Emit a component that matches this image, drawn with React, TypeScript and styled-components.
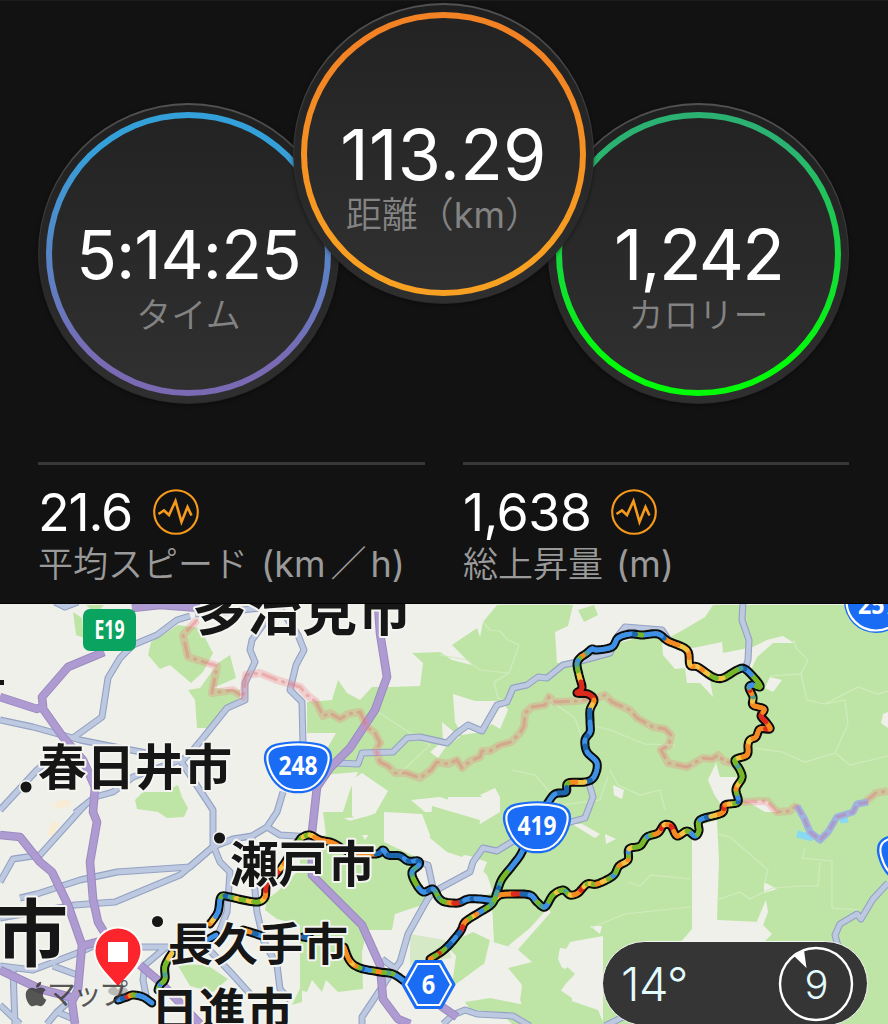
import React from 'react';
import styled, { createGlobalStyle } from 'styled-components'
import { FaApple } from 'react-icons/fa'

const GlobalStyle = createGlobalStyle`
  body {
    margin: 0;
    background: #121212;
    font-family: Inter, "Noto Sans CJK JP", sans-serif;
  }
`

const Page = styled.main`
  width: 888px;
  height: 1024px;
  display: flex;
  flex-direction: column;
  overflow: hidden;
`

const Summary = styled.section`
  height: 604px;
  box-sizing: border-box;
  border-top: 1px solid #1b1b1b;
  border-bottom: 1px solid #050505;
  background: #121212;
`

const DialRow = styled.div`
  display: flex;
  align-items: flex-start;
  padding: 2px 38px 0;
  height: 400px;
`

interface DialProps {
  lowered?: boolean
}

const DialRim = styled.div<DialProps>`
  flex: none;
  box-sizing: border-box;
  width: 301px;
  height: 301px;
  padding: 2px 1px 1px;
  border-radius: 50%;
  background: linear-gradient(#525252, #3e3e3e 30%, #2c2c2c 60%, #292929);
  box-shadow: 0 1px 4px rgba(0, 0, 0, 0.45);
  margin-top: ${(p) => p.lowered ? '100px' : '0'};
  position: relative;
  z-index: ${(p) => p.lowered ? 0 : 1};

  & + & {
    margin-left: -46px;
  }
`

const DialPlate = styled.div`
  height: 100%;
  box-sizing: border-box;
  padding: 7px;
  border-radius: 50%;
  background: linear-gradient(#202020, #2f2f2f);
`

const DialRing = styled.div<{ from: string, to: string }>`
  height: 100%;
  box-sizing: border-box;
  padding: 6px;
  border-radius: 50%;
  background: linear-gradient(${(p) => p.from} 12%, ${(p) => p.to} 88%);
`

const DialFace = styled.div`
  height: 100%;
  box-sizing: border-box;
  padding-top: 97px;
  border-radius: 50%;
  background: linear-gradient(#232323, #303030);
  display: flex;
  flex-direction: column;
  align-items: center;
`

const DialValue = styled.div<{ size: number, spacing: number }>`
  height: 74px;
  line-height: 80px;
  font-size: ${(p) => p.size}px;
  letter-spacing: ${(p) => p.spacing}px;
  color: #fff;
  white-space: nowrap;
`

const DialLabel = styled.div<{ size: number }>`
  font-size: ${(p) => p.size}px;
  font-weight: 350;
  line-height: 52px;
  color: #838383;
  white-space: nowrap;
`

const Unit = styled.span`
  font-size: 36px;
  font-weight: 400;
`

const Slash = styled.span`
  margin: 0 4px 0 5px;
  font-weight: 350;
`

const StatRow = styled.div`
  display: grid;
  grid-template-columns: 387px 386px;
  column-gap: 38px;
  padding: 59px 38px 0;
`

const Stat = styled.div`
  border-top: 3px solid #383838;
`

const StatTop = styled.div`
  display: flex;
  align-items: center;
  height: 62px;
  margin-top: 16px;
`

const StatValue = styled.span<{ width: number, spacing: number }>`
  width: ${(p) => p.width}px;
  font-size: 52px;
  letter-spacing: ${(p) => p.spacing}px;
  color: #fff;
`

const StatLabel = styled.div`
  display: flex;
  align-items: baseline;
  gap: 13px;
  margin-top: -3px;
  font-size: 35px;
  font-weight: 350;
  line-height: 48px;
  color: #9a9a9a;
  white-space: nowrap;
`

const MapPanel = styled.section`
  position: relative;
  height: 420px;
  overflow: hidden;
`

const MapCanvas = styled.svg`
  display: block;
  width: 888px;
  height: 420px;
`

const City = styled.text`
  font-family: "Noto Sans CJK JP", sans-serif;
  font-weight: 700;
  fill: #161616;
  stroke: #f4f4f0;
  stroke-width: 4px;
  stroke-linejoin: round;
  paint-order: stroke;
`

const ShieldText = styled.text`
  font-family: "Open Sans", sans-serif;
  font-weight: 700;
  font-size: 26px;
  fill: #fff;
  text-anchor: middle;
`

const Credit = styled.text`
  font-family: "Noto Sans CJK JP", sans-serif;
  font-size: 29px;
  fill: #3a3a3a;
  fill-opacity: 0.85;
`

const Weather = styled.div`
  position: absolute;
  left: 602px;
  top: 337px;
  width: 266px;
  height: 85px;
  box-sizing: border-box;
  padding: 0 13px 0 18px;
  display: flex;
  align-items: center;
  justify-content: space-between;
  border: 1.5px solid #f3f6f3;
  border-radius: 43px;
  background: #353535;
  color: #e2fbff;
`

const Temperature = styled.span`
  font-size: 47px;
  font-weight: 350;
  letter-spacing: -0.4px;
`

const Wind = styled.svg`
  width: 76px;
  height: 76px;
`

const WindSpeed = styled.text`
  font-size: 40px;
  font-weight: 350;
  fill: #e2fbff;
  text-anchor: middle;
`

const PulseIcon: React.FC = () => (
  <svg width="46" height="46" viewBox="0 0 46 46" fill="none" stroke="#f79a1c">
    <circle cx="23" cy="23" r="21.8" strokeWidth="2.1" />
    <path d="M5.5 25 L11 21.500 L16 26 L22.500 12 L28.500 33 L34.500 18 L38.500 26.500" strokeWidth="2.6" />
  </svg>
)

interface DialData {
  value: string
  label: React.ReactNode
  size: number
  spacing: number
  from: string
  to: string
  lowered?: boolean
  labelSize?: number
}

const Dial: React.FC<DialData> = ({ value, label, size, spacing, from, to, lowered, labelSize = 35 }) => (
  <DialRim lowered={lowered}>
    <DialPlate>
      <DialRing from={from} to={to}>
        <DialFace>
          <DialValue size={size} spacing={spacing}>{value}</DialValue>
          <DialLabel size={labelSize}>{label}</DialLabel>
        </DialFace>
      </DialRing>
    </DialPlate>
  </DialRim>
)

const forests = [
  '497,605 483,622 480,637 477,628 452,645 472,665 452,660 440,652 412,653 423,663 420,686 390,687 372,687 360,700 347,693 338,680 332,700 307,702 307,733 336,733 328,747 312,760 322,775 358,772 350,790 343,812 323,812 326,835 300,842 300,869 277,892 267,899 265,910 277,919 300,925 300,990 307,992 312,980 322,992 326,980 338,992 363,989 362,952 367,930 393,930 395,915 415,914 430,900 412,870 420,858 414,842 430,838 447,852 470,856 487,862 480,880 492,905 493,942 517,949 532,962 508,968 522,985 520,1000 530,1024 888,1024 888,605',
  '73,612 82,618 84,638 76,635',
  '86,605 104,605 96,614',
  '178,625 200,628 213,653 203,672 191,683 170,665 160,669 148,655 151,642',
  '230,655 236,678 213,688 240,690 240,697 217,720 213,728 197,728 195,700 188,690 200,688 218,663',
  '135,800 143,792 163,792 178,785 182,797 188,808 184,817 167,818 158,812 137,809',
  '177,964 207,965 228,979 213,992 190,986',
  '292,1005 302,984 302,1002',
  '473,932 490,940 483,969 452,986 456,956 446,945',
]

const clearings = [
  '573,605 713,605 705,617 683,630 670,637 640,637 612,645 598,650 580,660 557,663 555,632 568,626',
  '662,640 693,648 722,642 723,653 753,647 767,640 783,636 794,643 773,643 757,657 750,672 710,680 713,697 700,683 687,683 685,668 675,669 663,655',
  '770,677 782,680 773,692 765,688',
  '453,694 475,701 502,701 508,710 500,729 492,724 482,732 462,735 455,722',
  '442,722 460,737 445,748 438,758 430,752 443,741',
  '352,780 362,773 388,791 376,812 372,830 352,816',
  '411,800 440,797 458,803 458,812 425,812',
  '448,797 500,797 500,812 480,824 450,824',
  '480,795 495,788 500,797 488,802',
  '384,812 422,814 430,835 446,851 472,860 480,868 487,875 493,892 475,900 440,900 420,870 418,858 384,842',
  '344,818 382,816 365,840 356,824',
  '395,914 422,905 448,905 492,906 494,942 470,930 430,960 405,978 372,992 370,960 364,950 372,935 392,930',
  '364,990 400,980 455,985 482,965 520,950 507,968 522,985 518,1010 495,1000 470,1005 440,1024 340,1024',
  '547,909 551,912 522,945 517,950 508,946 530,928',
  '560,948 574,950 579,960 563,970 558,959',
  '570,942 603,936 603,1024 570,1024 572,998 560,990 575,974 560,960',
  '572,824 582,824 600,834 595,838',
  '692,837 700,825 717,820 719,860 717,920 760,922 772,934 763,943 680,943 692,929',
  '764,882 777,889 764,893',
  '766,900 768,912 762,928 757,921',
  '605,834 616,839 606,844',
  '590,926 602,926 600,934',
  '708,780 716,763 720,777 737,777 738,800 723,808 714,794',
  '613,785 624,790 622,799 614,795',
  '883,714 888,712 888,728 881,723',
  '745,800 767,801 778,812 765,812',
]

const paths = [
  'M483 622 490 630 500 631 508 640 519 645 509 673 494 682 498 698 512 703',
  'M509 673 480 670 467 660 440 655',
  'M372 708 418 738 430 745 400 773',
  'M770 676 801 674 807 700 825 704 845 700 848 724 835 753 805 762 782 752 755 748',
  'M801 674 808 660 796 648 794 640',
  'M825 704 858 687 878 694 888 691',
  'M835 753 850 765 888 756',
  'M590 725 610 730 645 744 675 745',
  'M512 770 535 775 548 790 560 805 600 800 608 777',
  'M717 834 730 837 768 870 764 885',
  'M805 848 802 858 832 861 832 908 860 910',
  'M590 928 625 914 690 907',
  'M628 882 640 886 651 875 690 879',
  'M717 900 740 892 750 899 772 888 800 886 818 886 820 862',
  'M550 700 575 718 584 745',
  'M610 770 618 785 640 795 660 790 665 810',
]

const roads = [
  'M190 616 177 620 157 635 133 645 120 658 108 678 102 717 73 738',
  'M0 720 33 727 80 740 110 746 183 760 193 750 203 738 227 708 245 700 245 683 255 662 250 650 252 640 268 618 284 612',
  'M55 602 65 607 78 602',
  'M280 608 298 635 304 650 296 665 290 690 302 702 303 745',
  'M0 810 37 770 48 760',
  'M75 813 95 797 113 792 133 777 180 760 190 775 213 810 213 845 220 862 230 872 227 912 218 935',
  'M283 792 277 812 267 827 252 836 233 839 213 847 190 867 117 872 80 880 37 894 20 898',
  'M267 827 280 835 312 837',
  'M213 847 180 875 115 902 75 905 0 918',
  'M84 806 40 855 13 859 0 882',
  'M252 836 254 880 257 912 264 942 277 965 280 989 290 1000',
  'M130 947 173 947 M165 948 145 965 143 980 147 1000',
  'M0 966 33 970 80 952 98 944 M53 966 80 976 M13 970 15 1024 M0 1005 20 1024',
  'M80 992 57 1012 47 1024 M57 1012 76 1020',
  'M200 940 233 975 252 996',
  'M337 763 358 764 362 753 393 752 407 738 420 737 447 743 457 733 468 725 482 731 497 705 507 702 513 688 527 685 538 677 547 678 563 665 577 662 610 653 617 637 625 627 662 630 670 642',
  'M743 602 742 620 749 640 748 660 745 669',
  'M588 780 593 797 585 818 567 823',
  'M515 840 497 851 483 848 473 862 470 872 433 892 427 900 408 934 400 962 390 975 362 1017 362 1028',
  'M382 959 397 970 M418 862 428 865 433 888',
  'M443 1024 453 1015 465 1010 477 1014 513 1016 530 1026',
  'M888 883 873 899 861 919 857 914 840 924 835 935 838 946',
  'M605 1026 625 1016',
  'M195 614 225 612 260 608',
]

const motorways = [
  'M132 608 160 605 200 608',
  'M0 697 37 709 43 706 42 697 68 667 104 652',
  'M41 706 63 737 83 760 95 787 93 812 97 822 90 862 93 899 98 922 104 932',
  'M0 835 20 837 40 862 52 872 68 905 82 945 78 989 72 1002 75 1024',
  'M82 946 105 940 M0 970 40 989 74 998',
  'M140 965 160 982 200 1024',
  'M378 604 380 633 387 677 375 710 350 748 330 768 317 787 312 832 312 875 362 925 380 965 383 999 398 1019 410 1024',
  'M432 1000 457 1017',
]

const borders = [
  'M197 620 183 635 188 657 217 666 212 693 233 690 243 697 246 675 260 673 277 680 300 687 307 695 316 702 323 716 330 713 340 719 348 714 360 712 367 727 375 733 380 743 376 750 380 762 388 766 395 773 406 773 420 778 431 770 437 762 448 764 457 760 462 768 470 761 480 757 482 751 490 751 500 745 511 742 520 733 524 726 525 713 532 707 545 705 549 697 555 702 577 701 600 697 605 695 612 702 630 710 637 718 653 727 665 729 671 735 669 745 661 750 668 763 687 767 703 758 712 759 718 755 724 761 736 764',
  'M742 802 767 801 777 812 790 811 797 805',
  'M865 802 876 793 888 791',
]

const riverBorder = 'M797 806 804 818 810 832 820 840 828 832 837 817 853 812 857 804 868 802'

const traceColors: Record<string, string> = {
  b: '#3f91e6',
  d: '#1d66ad',
  g: '#76b82a',
  y: '#f3c444',
  o: '#f58a22',
  r: '#dc2a1c',
  t: '#4ba494',
}

// x, y and the speed bands between this point and the next one
type TracePoint = [number, number, string]

const traces: TracePoint[][] = [
  [[118, 1000, 'bd'], [127, 997, 'ro'], [133, 995, 'gb'], [143, 997, 'b'], [152, 1003, 'b']],
  [[158, 990, 'g'], [160, 985, 'bg'], [165, 979, 'gtg'], [165, 966, 'gy'], [172, 953, 'y']],
  [[200, 944, 'b'], [216, 935, 'b']],
  [[210, 924, 'oyb'], [218, 912, 'b'], [221, 897, 'gd'], [230, 897, 'tgyg'], [243, 900, 'gyg'], [258, 902, 'gy'], [265, 897, 'or'], [267, 884, 'r'], [278, 872, 'ry'], [284, 864, 'o'], [299, 841, 'g'], [303, 837, 'yg'], [310, 835, 'yo'], [320, 840, 'o'], [333, 843, 'or'], [350, 852, 'o'], [376, 854, 'd'], [383, 850, 'b'], [388, 855, 'd'], [400, 856, 'db'], [408, 861, 'db'], [418, 861, 'd'], [419, 865, 'bt'], [412, 872, 'btg'], [415, 882, 'gb'], [423, 892, 'bd'], [433, 889, 'btg'], [439, 898, 'tg'], [445, 902, 'gor'], [458, 903, 'rdb'], [468, 899, 'bdb'], [480, 899, 'bb'], [493, 900, 'ty'], [500, 895, 'o'], [513, 894, 'rd'], [530, 895, 'bb'], [537, 902, 'gt'], [545, 907, 'bg'], [553, 895, 'gyg'], [563, 890, 'gtg'], [570, 895, 'yo'], [578, 893, 'ory'], [587, 884, 'gyg'], [597, 884, 'oyg'], [613, 876, 'bgg'], [619, 866, 'oy'], [628, 860, 'ogb'], [629, 849, 'yg'], [640, 846, 'gg'], [647, 837, 'bgo'], [658, 833, 'or'], [664, 825, 'yo'], [671, 826, 'ro'], [677, 836, 'oy'], [687, 831, 'gb'], [695, 836, 'bg'], [699, 831, 'gg'], [700, 820, 'bdyo'], [722, 813, 'or'], [725, 805, 'oyg'], [738, 802, 'dbg'], [736, 789, 'oyg'], [742, 778, 'gg'], [740, 770, 'gtg'], [735, 760, 'gyo'], [747, 755, 'o'], [748, 745, 'oy'], [750, 740, 'yo'], [756, 737, 'o'], [760, 729, 'or'], [770, 729, 'o'], [766, 722, 'rr'], [761, 716, 'ro'], [764, 709, 'o'], [753, 705, 'oy'], [753, 697, 'tor'], [749, 688, 'tb'], [752, 685, 'bg'], [760, 687, 'g'], [757, 681, 'gb'], [745, 669, 'dt'], [737, 670, 'gg'], [723, 678, 'yyg'], [713, 677, 'gyo'], [698, 667, 'yo'], [690, 665, 'yo'], [687, 650, 'yo'], [668, 641, 'odb'], [658, 634, 'bb'], [642, 635, 'gd'], [630, 634, 'bb'], [618, 638, 'b'], [612, 647, 'bb'], [597, 650, 'bb'], [592, 649, 'b'], [587, 653, 'to'], [580, 658, 'gb'], [577, 664, 'tg'], [579, 675, 'yr'], [582, 688, 'r'], [577, 693, 'r'], [588, 694, 'r'], [594, 700, 'oy'], [590, 710, 'd'], [590, 722, 'b'], [590, 732, 'bd'], [585, 740, 'bd'], [587, 752, 'b'], [597, 763, 'bb'], [594, 777, 'bd'], [585, 782, 'yo'], [568, 783, 'gd'], [566, 792, 'dd'], [555, 794, 'b'], [547, 804, 'b'], [530, 830, 'b'], [522, 852, 'b'], [513, 865, 'bg'], [502, 879, 'gtd'], [497, 892, 'tg'], [492, 904, 'tgb'], [477, 914, 'oygo'], [465, 922, 'or'], [460, 932, 'dbd'], [445, 949, 'grgo'], [430, 959, 'oo']],
  [[404, 981, 'b'], [393, 974, 'gtg'], [380, 972, 'ogbd'], [360, 968, 'goy'], [350, 961, 'o'], [344, 947, 'o']],
  [[310, 938, 'd'], [303, 937, 'b']],
  [[262, 936, 'bd'], [250, 932, 'o'], [243, 930, 'g']],
]

const STEPS = 6

const spline = (a: number, b: number, c: number, d: number, t: number) =>
  0.5 * (2 * b + (c - a) * t + (2 * a - 5 * b + 4 * c - d) * t * t + (3 * b - a - 3 * c + d) * t * t * t)

// splits every leg in short pieces that follow a curve through the points
const smoothTrace = (points: TracePoint[]) => {
  const pieces: TracePoint[] = []
  for (let i = 0; i < points.length - 1; i++) {
    const a = points[Math.max(i - 1, 0)]
    const b = points[i]
    const c = points[i + 1]
    const d = points[Math.min(i + 2, points.length - 1)]
    for (let s = 0; s < STEPS; s++) {
      const t = s / STEPS
      const band = b[2][Math.floor(t * b[2].length)]
      pieces.push([spline(a[0], b[0], c[0], d[0], t), spline(a[1], b[1], c[1], d[1], t), band])
    }
  }
  pieces.push(points[points.length - 1])
  return pieces
}

const Trace: React.FC<{ points: TracePoint[] }> = ({ points }) => {
  const pieces = smoothTrace(points)
  const outline = pieces.map((p) => p[0].toFixed(1) + ',' + p[1].toFixed(1)).join(' ')
  return (
    <g fill="none" strokeLinejoin="round" strokeLinecap="round">
      <polyline points={outline} stroke="#0b0d0c" strokeWidth="9" />
      {pieces.slice(0, -1).map(([x, y, band], i) =>
        <line
          key={i}
          x1={x}
          y1={y}
          x2={pieces[i + 1][0]}
          y2={pieces[i + 1][1]}
          stroke={traceColors[band]}
          strokeWidth="4.8"
        />)}
    </g>
  )
}

const shieldPath = 'M-22 -21 C-9 -24.500 9 -24.500 22 -21 C31 -18.500 33.500 -12 31 -3 C27 12 17 23 4 24 L-4 24 C-17 23 -27 12 -31 -3 C-33.500 -12 -31 -18.500 -22 -21 Z'

const Shield: React.FC<{ x: number, y: number, text: string }> = ({ x, y, text }) => (
  <g transform={`translate(${x} ${y})`}>
    <path d={shieldPath} fill="#1a6cf5" stroke="#1a6cf5" strokeWidth="4.500" />
    <path d={shieldPath} transform="scale(0.96)" fill="#1a6cf5" stroke="#fff" strokeWidth="2.200" />
    <ShieldText y="7.500" textLength={text.length * 13} lengthAdjust="spacingAndGlyphs">{text}</ShieldText>
  </g>
)

const RouteMap: React.FC = () => (
  <MapCanvas viewBox="0 604 888 420">
    <rect y="604" width="888" height="420" fill="#f0f0eb" />
    {forests.map((f, i) => <polygon key={i} points={f} fill="#bfe5a6" />)}
    {clearings.map((c, i) => <polygon key={i} points={c} fill="#f0f0eb" />)}
    <polygon points="384,810 384,842 372,850 372,835 345,835 345,822 368,816" fill="#bfe5a6" />
    <polygon points="432,806 480,820 478,842 462,857 447,852 430,838" fill="#bfe5a6" />
    <polygon points="410,934 445,940 452,958 410,965" fill="#d6e9c6" />
    <polygon points="465,1002 490,998 520,1004 560,997 598,1010 604,1024 512,1024 500,1012 470,1010" fill="#bfe5a6" />
    <polygon points="520,968 548,958 572,974 560,992 535,1002 522,988" fill="#bfe5a6" />
    <polygon points="578,610 594,605 598,615 584,622" fill="#bfe5a6" />
    <g fill="none" stroke="#d0ebbe" strokeWidth="1.2">
      {paths.map((d, i) => <path key={i} d={d} />)}
    </g>
    <polyline points="517,949 549,911" stroke="#f0f0eb" strokeWidth="1.5" fill="none" />
    <path d="M50 836 56 822 M55 806 70 802" stroke="#f9ecd5" strokeWidth="7" fill="none" />
    <g fill="none" strokeLinejoin="round">
      {roads.map((d, i) => <path key={i} d={d} stroke="#94a2c3" strokeWidth="7" />)}
      {roads.map((d, i) => <path key={i} d={d} stroke="#bdc9e0" strokeWidth="4.800" />)}
      {motorways.map((d, i) => <path key={i} d={d} stroke="#9b8abf" strokeWidth="8.600" />)}
      {motorways.map((d, i) => <path key={i} d={d} stroke="#ae9bd2" strokeWidth="6.600" />)}
      {borders.map((d, i) => <path key={i} d={d} stroke="#f17f86" strokeOpacity="0.28" strokeWidth="8" />)}
      {borders.map((d, i) => <path key={i} d={d} stroke="#df7377" strokeOpacity="0.38" strokeWidth="3.200" strokeLinecap="round" strokeDasharray="14 7 1 7" />)}
      <path d="M797 834 813 838 M840 820 848 819" stroke="#89d9f3" strokeWidth="7" />
      <path d={riverBorder} stroke="#9fb4dd" strokeWidth="7" />
      <path d={riverBorder} stroke="#b78ac2" strokeOpacity="0.7" strokeWidth="3" strokeDasharray="10 4" />
    </g>

    <City x="-5" y="960" fontSize="73">市</City>
    <rect x="0" y="680" width="4" height="5" fill="#161616" />

    {traces.map((t, i) => <Trace key={i} points={t} />)}

    <City x="192" y="630" fontSize="55">多治見市</City>
    <City x="38" y="785" fontSize="48.500">春日井市</City>
    <City x="230" y="882" fontSize="48.500">瀬戸市</City>
    <City x="168" y="961" fontSize="45">長久手市</City>
    <City x="151" y="1028" fontSize="47.500">日進市</City>
    <g fill="#161616" stroke="#f4f4f0" strokeWidth="1.500">
      <circle cx="26" cy="787" r="6.300" />
      <circle cx="219.500" cy="838" r="6.300" />
      <circle cx="157.500" cy="921.500" r="6.300" />
    </g>

    <rect x="83" y="609" width="53" height="42" rx="7" fill="#0ba360" />
    <ShieldText x="109.500" y="638.500" textLength="30" lengthAdjust="spacingAndGlyphs">E19</ShieldText>
    <Shield x={298} y={767} text="248" />
    <Shield x={537} y={827} text="419" />
    <Shield x={911} y={859} text="33" />
    <circle cx="876" cy="601" r="32" fill="#1a6cf5" />
    <circle cx="876" cy="601" r="29.500" fill="#1a6cf5" stroke="#fff" strokeWidth="2.200" />
    <ShieldText x="878" y="614" textLength="40" lengthAdjust="spacingAndGlyphs">257</ShieldText>
    <path d="M416 961.500 H441 L454 984.500 L441 1007.500 H416 L403 984.500 Z" fill="#1a6cf5" stroke="#1a6cf5" strokeWidth="3" strokeLinejoin="round" />
    <path d="M417.500 964 H439.500 L451 984.500 L439.500 1005 H417.500 L406 984.500 Z" fill="#1a6cf5" stroke="#fff" strokeWidth="2" strokeLinejoin="round" />
    <ShieldText x="428.500" y="993.500" textLength="13.500" lengthAdjust="spacingAndGlyphs">6</ShieldText>

    <ellipse cx="118" cy="991" rx="10" ry="5" fill="#555" opacity="0.35" />
    <path d="M118 988 C111 978 94.500 966 94.500 951 A23.500 23.500 0 0 1 141.500 951 C141.500 966 125 978 118 988 Z" fill="#fc252c" stroke="#fbfbf9" strokeWidth="2" />
    <rect x="108" y="942" width="20" height="20" fill="#fff" />
    <FaApple x="22" y="980" size={28} color="#3a3a3a" opacity={0.85} />
    <Credit x="47" y="1005" textLength="81">マップ</Credit>
  </MapCanvas>
)

const App: React.FC = () => (
  <>
    <GlobalStyle />
    <Page>
      <Summary>
        <DialRow>
          <Dial lowered value="5:14:25" label="タイム" size={67} spacing={-1} from="#34a0da" to="#7a6ab4" />
          <Dial
            value="113.29"
            label={<>距離（<Unit>km</Unit>）</>}
            size={70}
            spacing={0.3}
            from="#f28224"
            to="#f8a022"
            labelSize={36}
          />
          <Dial lowered value="1,242" label="カロリー" size={70} spacing={-1.8} from="#2bb273" to="#02fb08" />
        </DialRow>
        <StatRow>
          <Stat>
            <StatTop><StatValue width={115} spacing={-1.2}>21.6</StatValue><PulseIcon /></StatTop>
            <StatLabel>平均スピード<Unit>(km<Slash>／</Slash>h)</Unit></StatLabel>
          </Stat>
          <Stat>
            <StatTop><StatValue width={148} spacing={-0.6}>1,638</StatValue><PulseIcon /></StatTop>
            <StatLabel>総上昇量<Unit>(m)</Unit></StatLabel>
          </Stat>
        </StatRow>
      </Summary>
      <MapPanel>
        <RouteMap />
        <Weather>
          <Temperature>14°</Temperature>
          <Wind viewBox="0 0 76 76">
            <circle cx="38" cy="38" r="36" fill="none" stroke="#fff" strokeWidth="2.400" />
            <path d="M15 9 L26 4 L28.500 22 Z" fill="#fff" />
            <WindSpeed x="38.500" y="52.500">9</WindSpeed>
          </Wind>
        </Weather>
      </MapPanel>
    </Page>
  </>
)

export default App
